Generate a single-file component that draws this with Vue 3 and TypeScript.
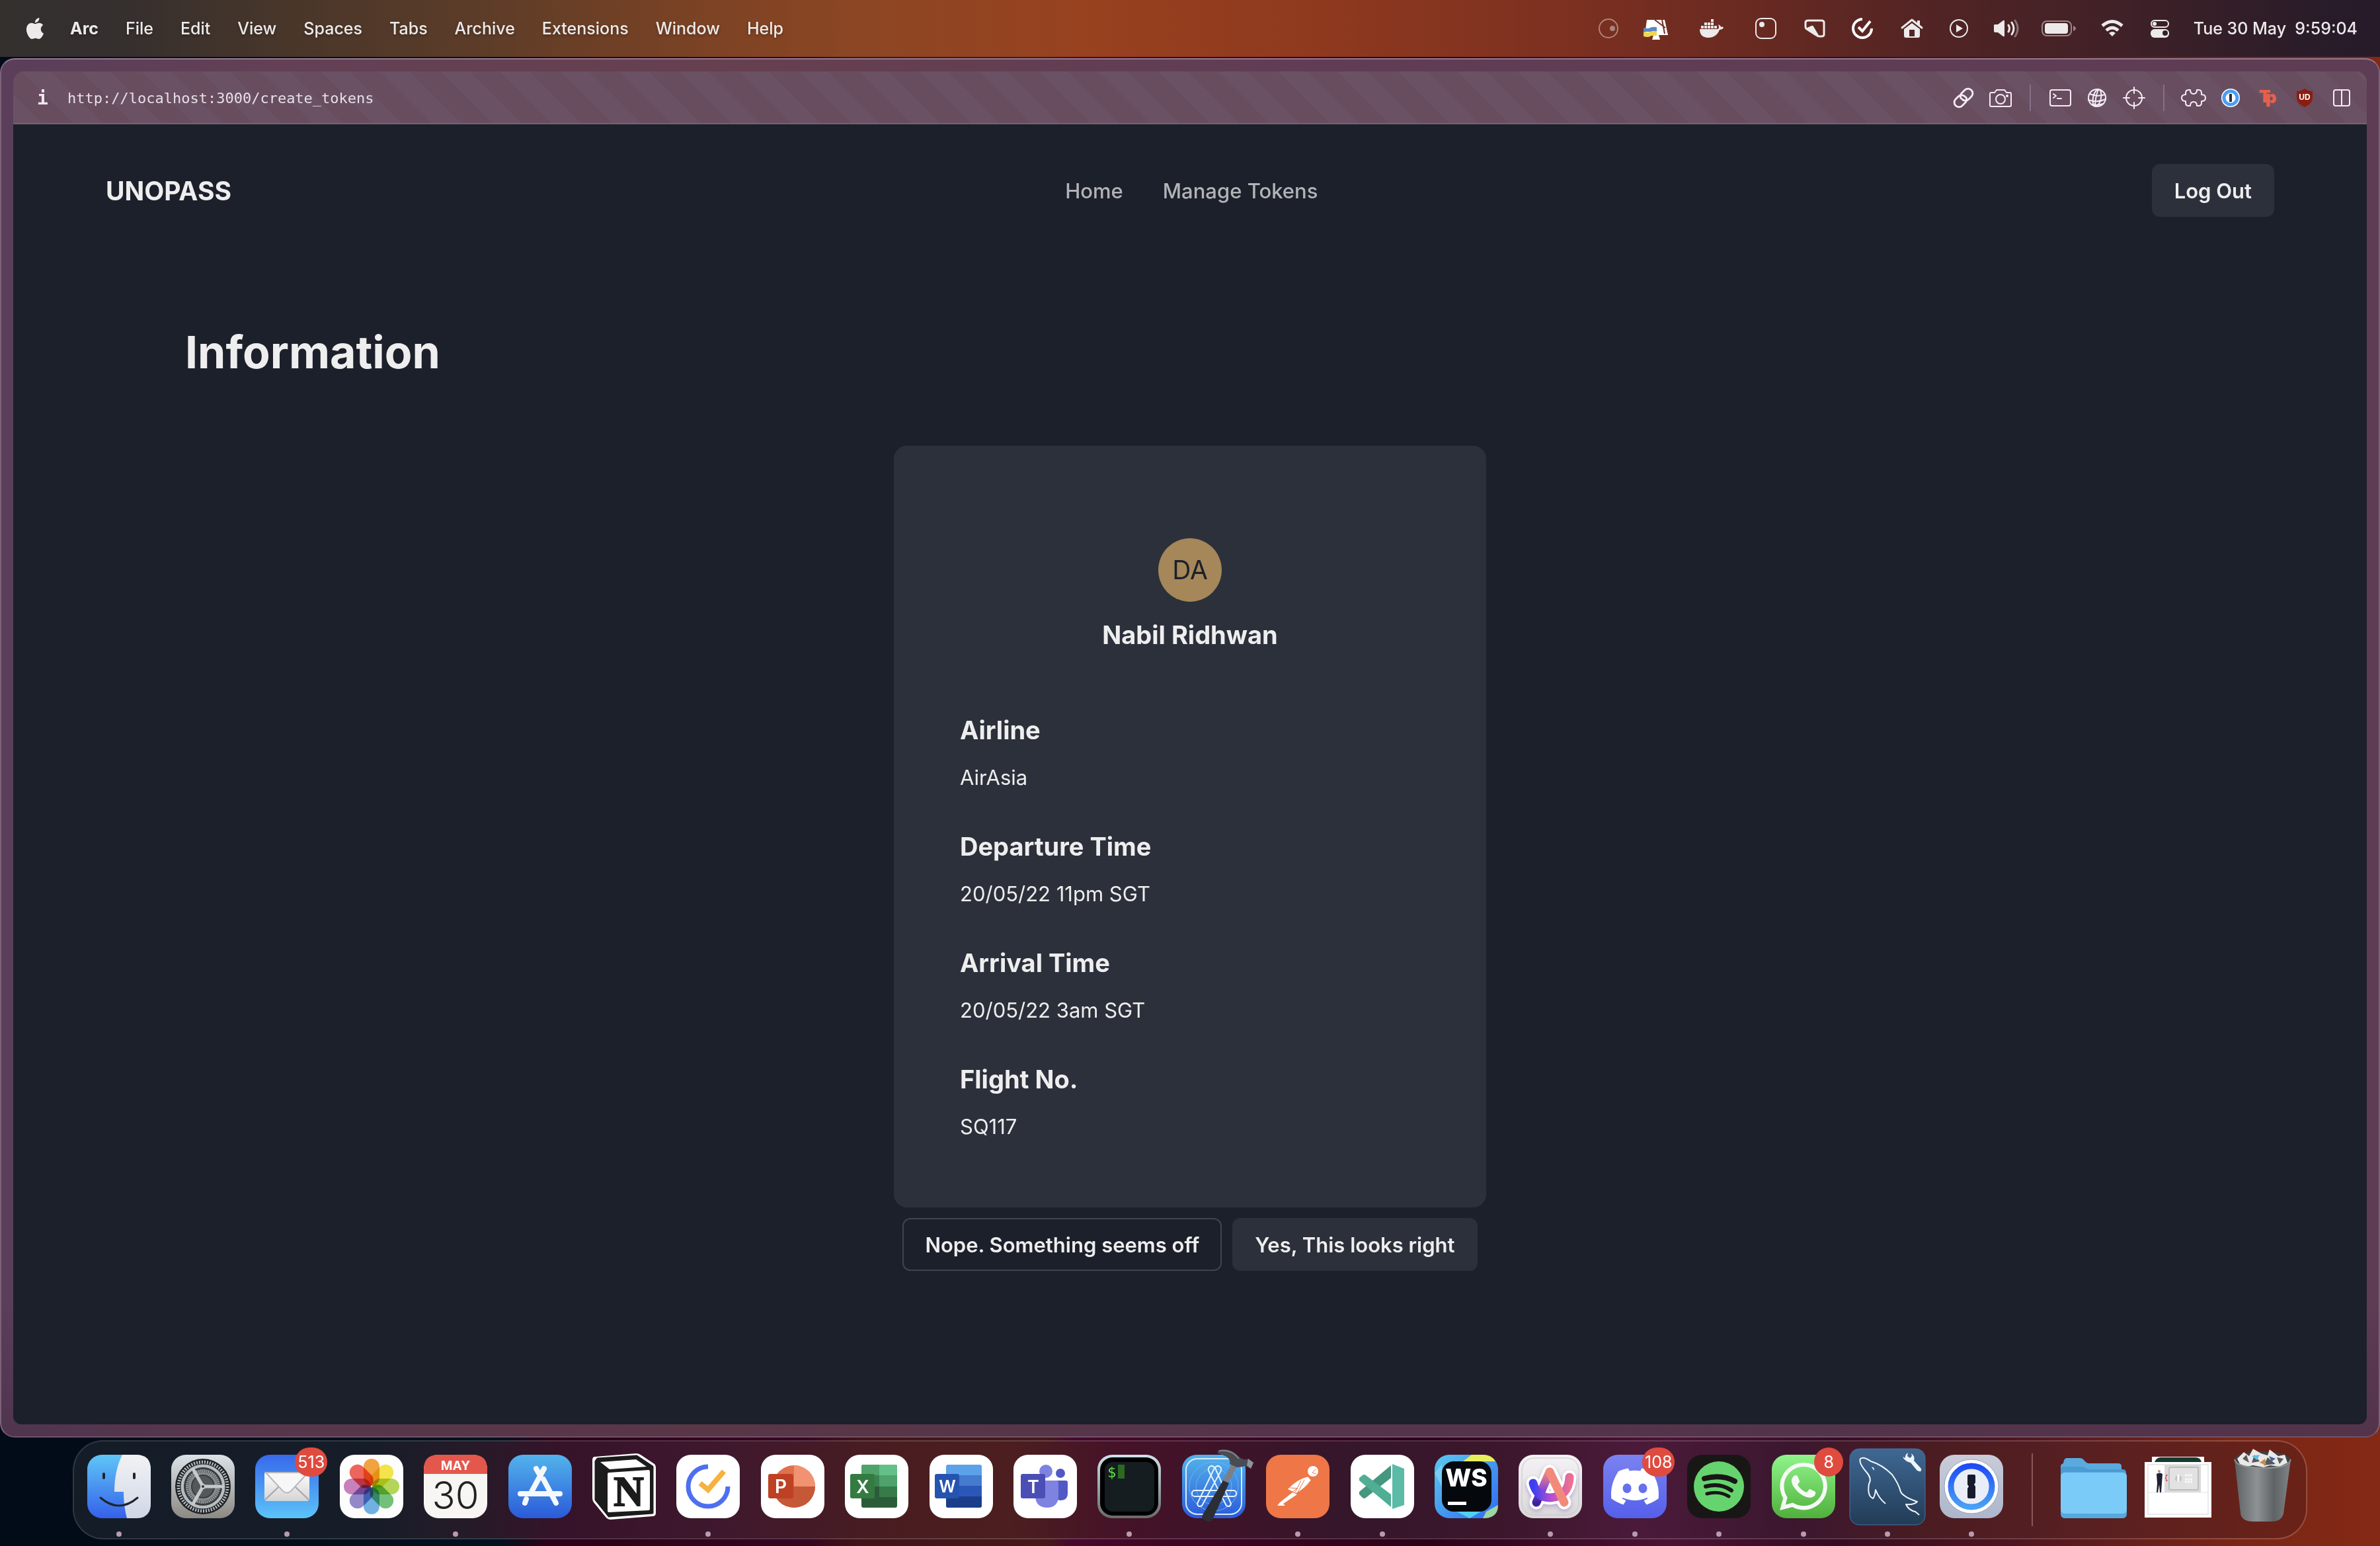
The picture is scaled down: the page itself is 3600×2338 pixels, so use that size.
<script setup lang="ts">
interface MenuIcon {
  name: string
  width: number
  art: string
}

interface ToolIcon {
  name: string
  art: string
}

interface DockApp {
  name: string
  art: string
  running?: boolean
  badge?: string
}

interface Detail {
  label: string
  value: string
}

const menus: string[] = ['File', 'Edit', 'View', 'Spaces', 'Tabs', 'Archive', 'Extensions', 'Window', 'Help']

const details: Detail[] = [
  { label: 'Airline', value: 'AirAsia' },
  { label: 'Departure Time', value: '20/05/22 11pm SGT' },
  { label: 'Arrival Time', value: '20/05/22 3am SGT' },
  { label: 'Flight No.', value: 'SQ117' },
]

const line = 'fill="none" stroke="#eceaea" stroke-linecap="round" stroke-linejoin="round"'

/* Status icons are drawn around their own centre, 40 units tall. */
const statusIcons: MenuIcon[] = [
  { name: 'Recorder', width: 66, art: `<g opacity=".45"><circle r="14" ${line} stroke-width="2"/><circle cx="6" r="4" fill="#eceaea"/></g>` },
  {
    name: 'Display',
    width: 76,
    art: '<path d="M-13-13H14L19 10H-16Z" fill="#fff"/><path d="M-1-13L15-1M10-13L14 8" stroke="#6f2d20" stroke-width="2"/><path d="M-3 10H5L7 17H-5Z" fill="#fff"/><path d="M-18-1Q-11 1-8-1T2-2V5H-18Z" fill="#5c87c8"/><path d="M-18 5Q-11 7-8 5T2 4V11Q-5 10-8 12T-18 12Z" fill="#ecd94a"/>',
  },
  {
    name: 'Docker',
    width: 94,
    art: '<g fill="#eceaea"><path d="M-18 1H9C12 0 11-3 10-6C13-5 14-3 14-2C16-3 18-2 18-1C17 1 14 2 12 2C9 10 3 14-5 14C-14 14-18 9-18 1Z"/><path d="M-16-4h4v4h-4zM-11-4h4v4h-4zM-6-4h4v4h-4zM-1-4h4v4h-4zM4-4h4v4H4zM-11-9h4v4h-4zM-6-9h4v4h-4zM-1-9h4v4h-4zM-1-14h4v4h-4z"/></g>',
  },
  { name: 'Camera control', width: 70, art: `<rect x="-15" y="-15" width="30" height="30" rx="8" ${line} stroke-width="2"/><circle cx="-6" cy="-6" r="4" fill="#eceaea"/>` },
  {
    name: 'Tag',
    width: 78,
    art: `<path d="M-14-9Q-14-12-10-12H10Q14-12 14-9V9Q14 12 10 12H7Q4 12 2 10L-12 1Q-14 0-14-3Z" ${line} stroke-width="3"/><path d="M-14 0L-5-4Q-3-5-2-3L7 12H4Z" fill="#eceaea"/>`,
  },
  { name: 'TickTick', width: 66, art: '<path d="M0-14A14 14 0 1 0 14 0" fill="none" stroke="#fff" stroke-width="4"/><path d="M-6-2L0 4L12-11" fill="none" stroke="#fff" stroke-width="4"/>' },
  {
    name: 'Home',
    width: 84,
    art: `<path d="M-15-1L0-13L15-1" ${line} stroke-width="3"/><path d="M8-12h4v8l-4-3z" fill="#eceaea"/><path fill-rule="evenodd" d="M-12 1L0-8L12 1V11Q12 14 9 14H-9Q-12 14-12 11ZM-4 2V12H4V2Z" fill="#eceaea"/>`,
  },
  { name: 'Now playing', width: 58, art: `<circle r="13" ${line} stroke-width="2"/><path d="M-4-6L6 0L-4 6Z" fill="#eceaea"/>` },
  {
    name: 'Sound',
    width: 86,
    art: `<path d="M-19-5Q-19-6-17-6H-13L-5-12Q-3-13-3-11V11Q-3 13-5 12L-13 6H-17Q-19 6-19 4Z" fill="#eceaea"/><path d="M3-5Q6 0 3 5M8-9Q14 0 8 9" ${line} stroke-width="3"/><path d="M13-12Q21 0 13 12" ${line} stroke-width="3" opacity=".4"/>`,
  },
  {
    name: 'Battery',
    width: 72,
    art: `<rect x="-25" y="-11" width="44" height="22" rx="7" ${line} stroke-width="2" opacity=".5"/><rect x="-21" y="-8" width="35" height="16" rx="4" fill="#eceaea"/><path d="M22-4Q26-2 26 0T22 4Z" fill="#eceaea" opacity=".5"/>`,
  },
  { name: 'Wi-Fi', width: 90, art: '<g fill="none" stroke="#eceaea" stroke-width="5"><path d="M-15-4Q0-17 15-4"/><path d="M-9 3Q0-5 9 3"/></g><path d="M-5 7Q0 3 5 7L0 12Z" fill="#eceaea"/>' },
  {
    name: 'Control Centre',
    width: 54,
    art: `<rect x="-13" y="-12" width="26" height="10" rx="5" ${line} stroke-width="2"/><circle cx="-8" cy="-7" r="3" fill="#eceaea"/><rect x="-14" y="1" width="28" height="13" rx="6" fill="#eceaea"/><circle cx="8" cy="7" r="4" fill="#33202a"/>`,
  },
]

const thin = 'fill="none" stroke="#f6ecf5" stroke-width="2" stroke-linecap="round" stroke-linejoin="round"'

const shareTools: ToolIcon[] = [
  {
    name: 'Copy link',
    art: `<g ${thin} transform="scale(1.4) translate(-12 -12)"><path d="M10 13a5 5 0 0 0 7.54.54l3-3a5 5 0 0 0-7.07-7.07l-3.7 3.7a5 5 0 0 0-.8 5"/><path d="M14 11a5 5 0 0 0-7.54-.54l-3 3a5 5 0 0 0 7.07 7.07l3.7-3.7a5 5 0 0 0 .8-5"/></g>`,
  },
  {
    name: 'Capture',
    art: `<path d="M-16-6Q-16-8-14-8H-9L-6-12H6L9-8H14Q16-8 16-6V11Q16 13 14 13H-14Q-16 13-16 11Z" ${thin}/><circle cy="2" r="7" ${thin}/><circle cx="10" cy="-3" r="2" fill="#f6ecf5"/>`,
  },
]

const devTools: ToolIcon[] = [
  { name: 'Console', art: `<rect x="-15" y="-12" width="31" height="24" rx="3" ${thin}/><path d="M-10-6L-6-3L-10 0M-4 1H2" ${thin}/>` },
  {
    name: 'Network',
    art: `<g ${thin}><circle r="13"/><ellipse rx="6" ry="13" transform="rotate(12)"/><path d="M2-13Q-3 0-3 13M-11-6Q0-1 12-5M-13 3Q0 8 13 2M-8 10Q0 12 9 9"/></g>`,
  },
  { name: 'Inspect', art: `<g ${thin}><circle r="12"/><path d="M0-16V-7M0 16V7M-16 0H-7M16 0H7"/></g>` },
]

const extensions: ToolIcon[] = [
  {
    name: 'Extensions',
    art: `<path d="M-12-7Q-12-12-8-12H-5Q-5-6 0-6T5-12H8Q12-12 12-7V-5Q18-5 18 0T12 5V7Q12 12 8 12H5Q5 6 0 6T-5 12H-8Q-12 12-12 7V5Q-18 5-18 0T-12-5Z" ${thin}/>`,
  },
  { name: '1Password', art: '<circle r="14" fill="#fff"/><circle r="10" fill="none" stroke="#4a9df5" stroke-width="5"/><rect x="-2" y="-6" width="4" height="12" fill="#2c2c34"/>' },
  { name: 'Toptal', art: '<g font-size="26" font-weight="900" fill="#e8604c"><text x="-13" y="7">T</text><text x="-3" y="8">p</text></g>' },
  { name: 'uBlock Origin', art: '<path d="M0-14Q6-10 12-10V0Q12 9 0 14Q-12 9-12 0V-10Q-6-10 0-14Z" fill="#8b1d10"/><text y="3" text-anchor="middle" font-size="12" font-weight="700" fill="#fff">UD</text>' },
  { name: 'Split view', art: `<rect x="-12" y="-12" width="24" height="24" rx="3" ${thin}/><path d="M0-12V12" ${thin}/>` },
]

const tile = (fill: string): string => `<rect x="-48" y="-48" width="96" height="96" rx="22" fill="${fill}"/>`

const petalColours = ['#f0921e', '#f0df2a', '#a7cf3a', '#5cb562', '#57a3dd', '#7f74c0', '#bf6bb0', '#ea4a3e']
const petals = petalColours
  .map((c, i) => `<rect x="-12" y="-42" width="24" height="41" rx="12" fill="${c}" opacity=".85" transform="rotate(${i * 45})" style="mix-blend-mode:multiply"/>`)
  .join('')

const arcMark = '<path d="M-26-5Q-20 17 0 17Q28 15 29-14"/><path d="M-1-22L-21 24"/><path d="M-1-22L21 24"/>'

/* Dock artwork is centred on 0,0 with a 96 unit tile. */
const apps: DockApp[] = [
  {
    name: 'Finder',
    running: true,
    art: `${tile('url(#finderBlue)')}<path d="M5-48H26Q48-48 48-26V26Q48 48 26 48H12Q7 30 7 8H-7Q-7-24 5-48Z" fill="url(#finderGrey)"/><path d="M-23-19V-13M23-19V-13" stroke="#20242c" stroke-width="4" stroke-linecap="round"/><path d="M-28 17Q0 41 28 17" fill="none" stroke="#20242c" stroke-width="3" stroke-linecap="round"/>`,
  },
  {
    name: 'System Settings',
    art: `${tile('url(#steel)')}<circle r="42" fill="#1f2224"/><circle r="37" fill="none" stroke="#b7bec2" stroke-width="5" stroke-dasharray="2 2"/><circle r="31" fill="none" stroke="#b7bec2" stroke-width="5"/><circle r="29" fill="#3a3d40"/><circle r="24" fill="none" stroke="#9aa0a3" stroke-width="4" stroke-dasharray="2 1"/><circle r="20" fill="none" stroke="#85898c" stroke-width="4"/><circle r="16" fill="#55585b"/><path d="M0 0H32M0 0L-16-28M0 0L-16 28" stroke="#c3cacd" stroke-width="5"/><circle r="4" fill="#c3cacd"/><circle r="2" fill="#333"/>`,
  },
  {
    name: 'Mail',
    running: true,
    badge: '513',
    art: `${tile('url(#mailBlue)')}<rect x="-34" y="-22" width="68" height="44" rx="4" fill="url(#paper)"/><path d="M-33 20L-12 0M33 20L12 0" stroke="#a5a5a8" stroke-width="2"/><path d="M-32-21L-6 7Q0 12 6 7L32-21Z" fill="#f7f7f8" stroke="#b9b9bc" stroke-width="2"/>`,
  },
  { name: 'Photos', art: `${tile('#fdfdfd')}<g style="isolation:isolate">${petals}</g>` },
  {
    name: 'Calendar',
    running: true,
    art: `${tile('#f7f6f3')}<path d="M-48-19V-26Q-48-48-26-48H26Q48-48 48-26V-19Z" fill="#e4574d"/><text y="-25" text-anchor="middle" font-size="19" font-weight="700" fill="#fff">MAY</text><text y="34" text-anchor="middle" font-size="58" font-weight="300" fill="#222">30</text>`,
  },
  {
    name: 'App Store',
    art: `${tile('url(#storeBlue)')}<g stroke="#f4f8fd" stroke-width="8" stroke-linecap="round"><path d="M-6-27L-2-20M6-27L-13 8M-21 19L-23 25M5-11L24 25M-30 11H30"/></g>`,
  },
  {
    name: 'Notion',
    art: '<path d="M-44-45L18-50Q22-50 25-48L46-34Q48-32 48-29V40Q48 45 43 45L-20 50Q-25 50-28 46L-46 24Q-48 21-48 18V-40Q-48-45-44-45Z" fill="#fff"/><path d="M-40-42L19-46L43-30V40L-23 45L-43 20V-38Z" fill="#1c1c1c" stroke="#1c1c1c" stroke-width="3" stroke-linejoin="round"/><path d="M-36-37L18-41L34-30L-22-26Z" fill="#fff"/><path d="M-25-19Q-25-21-23-21L37-25Q39-25 39-22V34Q39 36 37 36L-23 39Q-25 39-25 37Z" fill="#fff"/><text x="7" y="29" text-anchor="middle" font-family="Liberation Serif, serif" font-size="63" font-weight="700" fill="#1c1c1c" stroke="#1c1c1c" stroke-width="2">N</text>',
  },
  {
    name: 'TickTick',
    running: true,
    art: `${tile('#fff')}<path d="M0-30A30 30 0 1 0 30 0" fill="none" stroke="#4e6ff0" stroke-width="7"/><path d="M-12-5L0 5L24-23" fill="none" stroke="#f5b33e" stroke-width="8"/>`,
  },
  {
    name: 'PowerPoint',
    art: `${tile('#fff')}<circle cx="2" r="32" fill="#e0714f"/><path d="M2-32A32 32 0 0 1 34 0H2Z" fill="#f19272"/><path d="M-30 0H34A32 32 0 0 1-30 0Z" fill="#c55836"/><rect x="-37" y="-19" width="38" height="37" rx="3" fill="#be4123"/><text x="-18" y="10" text-anchor="middle" font-size="28" font-weight="600" fill="#fff">P</text>`,
  },
  {
    name: 'Excel',
    art: `${tile('#fff')}<rect x="-23" y="-33" width="54" height="65" rx="3" fill="#2b5c39"/><path d="M-23-17V-30Q-23-33-20-33H4V-17Z" fill="#4ea26a"/><path d="M4-33H28Q31-33 31-30V-17H4Z" fill="#63c086"/><path d="M-23-17H4V0H-23Z" fill="#3a8250"/><path d="M4-17H31V0H4Z" fill="#4ea26a"/><path d="M4 0H31V16H4Z" fill="#377c48"/><rect x="-40" y="-19" width="37" height="37" rx="3" fill="#347b42"/><text x="-21" y="10" text-anchor="middle" font-size="27" font-weight="600" fill="#fff">X</text>`,
  },
  {
    name: 'Word',
    art: `${tile('#fff')}<rect x="-23" y="-33" width="54" height="65" rx="3" fill="#5ba2e8"/><path d="M-23-17H31V0H-23Z" fill="#447bcf"/><path d="M-23-1H31V16H-23Z" fill="#2b58b8"/><path d="M-23 15H31V29Q31 32 28 32H-20Q-23 32-23 29Z" fill="#1c3d8a"/><rect x="-40" y="-19" width="37" height="37" rx="3" fill="#2553b2"/><text x="-21" y="9" text-anchor="middle" font-size="25" font-weight="600" fill="#fff">W</text>`,
  },
  {
    name: 'Teams',
    art: `${tile('#fff')}<circle cx="1" cy="-23" r="10" fill="#7e83e2"/><circle cx="23" cy="-20" r="7" fill="#5159c5"/><path d="M10-9H31Q34-9 34-6V10Q34 21 23 21Q18 21 14 18Z" fill="#5159c5"/><path d="M-15-9H17Q20-9 20-6V14Q20 32 2 32Q-15 31-15 14Z" fill="#7e83e2"/><rect x="-37" y="-19" width="37" height="37" rx="3" fill="#4b4fb5"/><text x="-18" y="10" text-anchor="middle" font-size="27" font-weight="600" fill="#fff">T</text>`,
  },
  {
    name: 'Terminal',
    running: true,
    art: `${tile('url(#bezel)')}<rect x="-44" y="-44" width="88" height="88" rx="19" fill="#000"/><rect x="-37" y="-37" width="75" height="75" rx="12" fill="#161d20"/><text x="-33" y="-14" font-family="DejaVu Sans Mono, monospace" font-size="22" fill="#62e24c">$</text><rect x="-17" y="-33" width="10" height="21" fill="#2c6a22"/>`,
  },
  {
    name: 'Xcode',
    art: `${tile('url(#storeBlue)')}<rect x="-42" y="-42" width="84" height="84" rx="17" fill="none" stroke="#d8ecff" stroke-width="2"/><g fill="none" stroke="#6fb0ee"><circle r="37"/><circle r="27"/></g><g fill="none" stroke="#e6f3ff" stroke-width="2"><rect x="-33" y="6" width="67" height="9" rx="4"/><path d="M-6-30Q-2-33 2-28L26 26Q25 32 19 29L-8-24Q-9-28-6-30ZM9-30Q5-33 1-28L-25 26Q-24 32-18 29L11-24Q12-28 9-30Z"/></g><path d="M28-36L36-32L22-6L13-8Z" fill="#7d7f86"/><path d="M14-9L23-5L-1 48Q-4 55-12 52T-17 43Z" fill="#2c2e36"/><path d="M6-54Q24-60 37-46Q43-40 49-41L52-42L60-36L56-27L47-31Q42-29 35-29L24-34Q27-45 6-50Z" fill="#4a4c54"/><path d="M8-54Q26-57 38-42" fill="none" stroke="#85878e" stroke-width="2"/><path d="M52-42L60-36L56-27L50-32Z" fill="#90929a"/>`,
  },
  {
    name: 'Postman',
    running: true,
    art: `${tile('#ee7647')}<circle cx="23" cy="-23" r="8" fill="#fff"/><path d="M16-15L20-10Q10 4-3 10L-15 4Q-1-11 16-15ZM-8 9L-1 12L-22 26L-19 29L-31 29L-27 24Z" fill="#fff"/><path d="M15-15L20-10M27-26L22-21L28-19M5-9L-4 9M10-10L0 9M-12 2L0 3M-9 9L0 2" fill="none" stroke="#ee7647" stroke-width="1"/>`,
  },
  {
    name: 'VS Code Insiders',
    running: true,
    art: `${tile('#fff')}<path d="M13-32V-13L-25 17Q-28 19-30 17L-35 12V8Z" fill="#45977f"/><path d="M-35-13L-30-17Q-28-19-25-17L13 12V31L-35-9Z" fill="#4fae94"/><path d="M15-34L33-27V28L15 34Z" fill="#5cbba6"/>`,
  },
  {
    name: 'WebStorm',
    art: `${tile('url(#stormBlue)')}<path d="M-5-38L8-48H26Q38-48 44-38Z" fill="#e8ef5c"/><path d="M-48-20L-37-34V0Z" fill="#8fdcf8" opacity=".6"/><path d="M25 48L30 38L48 28Q48 48 26 48Z" fill="#9fd6a0"/><path d="M-15 38H22L5 48Z" fill="#4fd0f2"/><rect x="-37" y="-38" width="75" height="76" rx="18" fill="#05080c"/><text y="0" text-anchor="middle" font-size="37" font-weight="800" fill="#fff">WS</text><rect x="-28" y="23" width="28" height="5" fill="#fff"/>`,
  },
  {
    name: 'Arc',
    running: true,
    art: `${tile('url(#pearl)')}<rect x="-43" y="-43" width="86" height="86" rx="18" fill="none" stroke="#c9c6c9"/><g fill="none" stroke="#fff" stroke-width="21" stroke-linecap="round" style="filter:drop-shadow(0 3px 3px #b9a8cc)">${arcMark}</g><g fill="none" stroke-width="13" stroke-linecap="round"><path d="M-1-22L-21 24" stroke="url(#arcLeg)"/><path d="M-26-5Q-20 17 0 17Q28 15 29-14" stroke="url(#arcSwoosh)"/><path d="M-1-22L21 24" stroke="#f28a7c"/></g>`,
  },
  {
    name: 'Discord',
    running: true,
    badge: '108',
    art: `${tile('url(#blurple)')}<path transform="scale(3) translate(-12 -12)" fill="#fff" d="M20.317 4.3698a19.7913 19.7913 0 00-4.8851-1.5152.0741.0741 0 00-.0785.0371c-.211.3753-.4447.8648-.6083 1.2495-1.8447-.2762-3.68-.2762-5.4868 0-.1636-.3933-.4058-.8742-.6177-1.2495a.077.077 0 00-.0785-.037 19.7363 19.7363 0 00-4.8852 1.515.0699.0699 0 00-.0321.0277C.5334 9.0458-.319 13.5799.0992 18.0578a.0824.0824 0 00.0312.0561c2.0528 1.5076 4.0413 2.4228 5.9929 3.0294a.0777.0777 0 00.0842-.0276c.4616-.6304.8731-1.2952 1.226-1.9942a.076.076 0 00-.0416-.1057c-.6528-.2476-1.2743-.5495-1.8722-.8923a.077.077 0 01-.0076-.1277c.1258-.0943.2517-.1923.3718-.2914a.0743.0743 0 01.0776-.0105c3.9278 1.7933 8.18 1.7933 12.0614 0a.0739.0739 0 01.0785.0095c.1202.099.246.1981.3728.2924a.077.077 0 01-.0066.1276 12.2986 12.2986 0 01-1.873.8914.0766.0766 0 00-.0407.1067c.3604.698.7719 1.3628 1.225 1.9932a.076.076 0 00.0842.0286c1.961-.6067 3.9495-1.5219 6.0023-3.0294a.077.077 0 00.0313-.0552c.5004-5.177-.8382-9.6739-3.5485-13.6604a.061.061 0 00-.0312-.0286zM8.02 15.3312c-1.1825 0-2.1569-1.0857-2.1569-2.419 0-1.3332.9555-2.4189 2.157-2.4189 1.2108 0 2.1757 1.0952 2.1568 2.419 0 1.3332-.9555 2.4189-2.1569 2.4189zm7.9748 0c-1.1825 0-2.1569-1.0857-2.1569-2.419 0-1.3332.9554-2.4189 2.1569-2.4189 1.2108 0 2.1757 1.0952 2.1568 2.419 0 1.3332-.946 2.4189-2.1568 2.4189Z"/>`,
  },
  {
    name: 'Spotify',
    running: true,
    art: `${tile('#191716')}<circle r="38" fill="#66d46e"/><g fill="none" stroke="#191716" stroke-linecap="round"><path d="M-22-12Q4-19 24-8" stroke-width="8"/><path d="M-20 0Q2-6 19 6" stroke-width="6"/><path d="M-18 11Q0 6 15 15" stroke-width="5"/></g>`,
  },
  {
    name: 'WhatsApp',
    running: true,
    badge: '8',
    art: `${tile('url(#chatGreen)')}<path transform="scale(3) translate(-12 -12)" fill="#f6faf5" d="M17.472 14.382c-.297-.149-1.758-.867-2.03-.967-.273-.099-.471-.148-.67.15-.197.297-.767.966-.94 1.164-.173.199-.347.223-.644.075-.297-.15-1.255-.463-2.39-1.475-.883-.788-1.48-1.761-1.653-2.059-.173-.297-.018-.458.13-.606.134-.133.298-.347.446-.52.149-.174.198-.298.298-.497.099-.198.05-.371-.025-.52-.075-.149-.669-1.612-.916-2.207-.242-.579-.487-.5-.669-.51-.173-.008-.371-.01-.57-.01-.198 0-.52.074-.792.372-.272.297-1.04 1.016-1.04 2.479 0 1.462 1.065 2.875 1.213 3.074.149.198 2.096 3.2 5.077 4.487.709.306 1.262.489 1.694.625.712.227 1.36.195 1.871.118.571-.085 1.758-.719 2.006-1.413.248-.694.248-1.289.173-1.413-.074-.124-.272-.198-.57-.347m-5.421 7.403h-.004a9.87 9.87 0 01-5.031-1.378l-.361-.214-3.741.982.998-3.648-.235-.374a9.86 9.86 0 01-1.51-5.26c.001-5.45 4.436-9.884 9.888-9.884 2.64 0 5.122 1.03 6.988 2.898a9.825 9.825 0 012.893 6.994c-.003 5.45-4.437 9.884-9.885 9.884m8.413-18.297A11.815 11.815 0 0012.05 0C5.495 0 .16 5.335.157 11.892c0 2.096.547 4.142 1.588 5.945L.057 24l6.305-1.654a11.882 11.882 0 005.683 1.448h.005c6.554 0 11.89-5.335 11.893-11.893a11.821 11.821 0 00-3.48-8.413z"/>`,
  },
  {
    name: 'MySQL Workbench',
    running: true,
    art: '<rect x="-57" y="-57" width="114" height="115" rx="14" fill="url(#benchBlue)" stroke="#46739f" stroke-width="1"/><path d="M-3 26Q-13 18-18 5Q-19 15-22 18Q-31 14-28-4Q-23-12-32-22Q-44-36-41-42Q-36-46-25-38Q-8-33 7-18Q17-4 20 8Q24 16 45 23Q40 28 28 27Q32 36 42 38L48 43" fill="none" stroke="#f2f7fb" stroke-width="2" stroke-linejoin="round"/><path d="M-24-29Q-20-30-20-24Z" fill="#f2f7fb"/><path d="M31-51L30-46L34-43L37-46L36-50Q42-46 40-39L51-27Q52-22 48-23L45-24L35-36Q26-38 23-45L27-43Q26-48 31-51Z" fill="#eef5fa"/>',
  },
  {
    name: '1Password',
    running: true,
    art: `${tile('url(#vault)')}<circle r="41" fill="#fff"/><circle r="41" fill="none" stroke="#9aa2ba"/><circle r="31" fill="none" stroke="url(#ring)" stroke-width="9"/><circle r="26" fill="#e9edf8"/><path d="M-6-16Q-6-18-4-18H4Q6-18 6-16V-6L4-3L6 0V16Q6 18 4 18H-4Q-6 18-6 16V3L-4 0L-6-3Z" fill="#171a2c"/>`,
  },
]

const shelf: DockApp[] = [
  {
    name: 'Downloads',
    art: '<path d="M-49-30Q-49-34-45-35Q-44-43-40-43H-20Q-16-43-13-39T-6-35H38Q43-35 43-30V0H-49Z" fill="#5aaade"/><path d="M-49-26Q-49-30-45-30H-18Q-14-30-11-28T-4-26H45Q50-26 50-20V0H-49Z" fill="#4a9bd4"/><rect x="-49" y="-22" width="100" height="70" rx="6" fill="#56a9de"/><rect x="-49" y="-21" width="100" height="62" rx="6" fill="#7bcbf8"/>',
  },
  {
    name: 'Documents stack',
    art: '<rect x="-39" y="-45" width="79" height="20" fill="#fff"/><path d="M-35-37Q-32-44-26-44H27Q34-44 36-37Z" fill="#153a30"/><rect x="-50" y="-37" width="101" height="84" fill="#fff"/><rect x="-45" y="-33" width="91" height="75" fill="none" stroke="#d4d4d4"/><rect x="-20" y="-33" width="55" height="42" fill="#d9d9d9"/><rect x="-13" y="-29" width="44" height="34" rx="2" fill="#e2e2e2" stroke="#bdbdbd" stroke-width="2"/><circle cx="1" cy="-12" r="5" fill="#c4c4c4"/><path d="M1-18V-7" stroke="#fff" stroke-width="3"/><path d="M11-17H22M11-11H22M11-7H22" stroke="#f8f8f8" stroke-width="3" stroke-dasharray="3 1"/><path d="M-45 9H46" stroke="#e3e3e3"/><circle cx="-28" cy="-23" r="2" fill="#c98a6a"/><path d="M-32-19Q-27-22-23-19L-24-5L-25 9H-27L-28-3L-30 9H-32L-31-5Z" fill="#1c2233"/><path d="M-16-18Q-20-13-16-8" fill="none" stroke="#d84c48" stroke-width="2" stroke-dasharray="3 1"/>',
  },
  {
    name: 'Bin',
    art: '<path d="M-42-41L-33 41Q-31 53-14 53H14Q29 53 32 41L43-41Z" fill="url(#bin)"/><ellipse cy="-41" rx="42" ry="12" fill="#3e4143"/><path d="M-38-42L-28-52L-20-46L-14-57L-2-50L8-47L11-56L24-46L34-48L38-36L26-30L12-32L2-29L-14-32L-24-30L-34-34Z" fill="#e9e9e7"/><path d="M-30-42L-20-36L-24-48ZM-12-48L-4-38L-16-36ZM8-44L20-34L2-32ZM22-44L32-42L26-34Z" fill="#55595c"/><path d="M-16-46L-4-48L-8-40Z" fill="#5fbde6"/><path d="M10-46L20-42L14-38Z" fill="#3f62a8"/><path d="M-4-36L4-42L6-32Z" fill="#c98b4a"/><path d="M-42-41Q-40-29 0-28T43-41" fill="none" stroke="#8c9092" stroke-width="2"/>',
  },
]
</script>

<template>
  <div class="desktop">
    <svg class="defs" aria-hidden="true">
      <defs>
        <linearGradient id="finderBlue" x2="0" y2="1"><stop stop-color="#5fc6f7" /><stop offset="1" stop-color="#3560ea" /></linearGradient>
        <linearGradient id="finderGrey" x2="0" y2="1"><stop stop-color="#f2f2f4" /><stop offset="1" stop-color="#cfd7e6" /></linearGradient>
        <linearGradient id="steel" x2="0" y2="1"><stop stop-color="#dbe3e8" /><stop offset="1" stop-color="#8d8883" /></linearGradient>
        <linearGradient id="mailBlue" x2="0" y2="1"><stop stop-color="#3769ec" /><stop offset="1" stop-color="#5cc4f9" /></linearGradient>
        <linearGradient id="paper" x2="0" y2="1"><stop stop-color="#fdfdfd" /><stop offset="1" stop-color="#d5d5d6" /></linearGradient>
        <linearGradient id="storeBlue" x2="0" y2="1"><stop stop-color="#52b4ec" /><stop offset="1" stop-color="#2b5ad9" /></linearGradient>
        <linearGradient id="bezel" x2="0" y2="1"><stop stop-color="#cfe2ec" /><stop offset="1" stop-color="#6a6a6a" /></linearGradient>
        <linearGradient id="stormBlue" x2="1" y2="1"><stop stop-color="#5cc8ee" /><stop offset="1" stop-color="#2f6cf0" /></linearGradient>
        <linearGradient id="pearl" x2="0" y2="1"><stop stop-color="#f4f2f4" /><stop offset="1" stop-color="#d9d7d9" /></linearGradient>
        <linearGradient id="arcSwoosh"><stop stop-color="#3b3ff2" /><stop offset="0.5" stop-color="#b44fd0" /><stop offset="1" stop-color="#ea6f92" /></linearGradient>
        <linearGradient id="arcLeg" x2="0" y2="1"><stop stop-color="#f28a7c" /><stop offset="0.6" stop-color="#8a45d8" /><stop offset="1" stop-color="#3c22a0" /></linearGradient>
        <linearGradient id="blurple" x2="0" y2="1"><stop stop-color="#7b82f1" /><stop offset="1" stop-color="#5560ea" /></linearGradient>
        <linearGradient id="chatGreen" x2="0" y2="1"><stop stop-color="#8ff58a" /><stop offset="1" stop-color="#50b03c" /></linearGradient>
        <linearGradient id="benchBlue" x2="0" y2="1"><stop stop-color="#3f6894" /><stop offset="1" stop-color="#223c56" /></linearGradient>
        <linearGradient id="vault" x2="0" y2="1"><stop stop-color="#c9ccd8" /><stop offset="1" stop-color="#adb6cc" /></linearGradient>
        <linearGradient id="ring" x2="0" y2="1"><stop stop-color="#1f4df5" /><stop offset="1" stop-color="#4aa0f4" /></linearGradient>
        <linearGradient id="bin"><stop stop-color="#5d6163" /><stop offset="0.4" stop-color="#8d9294" /><stop offset="0.7" stop-color="#5f6365" /><stop offset="1" stop-color="#808486" /></linearGradient>
      </defs>
    </svg>

    <header class="menubar">
      <nav class="menus" aria-label="Application menu">
        <button type="button" class="menu apple" aria-label="Apple">
          <svg viewBox="0 0 24 24" width="32" height="32" fill="#eceaea">
            <path d="M12.152 6.896c-.948 0-2.415-1.078-3.96-1.04-2.04.027-3.91 1.183-4.961 3.014-2.117 3.675-.546 9.103 1.519 12.09 1.013 1.454 2.208 3.09 3.792 3.039 1.52-.065 2.09-.987 3.935-.987 1.831 0 2.35.987 3.96.948 1.637-.026 2.676-1.48 3.676-2.948 1.156-1.688 1.636-3.325 1.662-3.415-.039-.013-3.182-1.221-3.22-4.857-.026-3.04 2.48-4.494 2.597-4.559-1.429-2.09-3.623-2.324-4.39-2.376-2-.156-3.675 1.09-4.61 1.09zM15.53 3.83c.843-1.012 1.4-2.427 1.245-3.83-1.207.052-2.662.805-3.532 1.818-.78.896-1.454 2.338-1.273 3.714 1.338.104 2.715-.688 3.559-1.701" />
          </svg>
        </button>
        <button type="button" class="menu current">Arc</button>
        <button v-for="menu in menus" :key="menu" type="button" class="menu">{{ menu }}</button>
      </nav>
      <div class="status">
        <button v-for="icon in statusIcons" :key="icon.name" type="button" class="status-item" :aria-label="icon.name">
          <svg :width="icon.width" height="40" :viewBox="`${-icon.width / 2} -20 ${icon.width} 40`" v-html="icon.art"></svg>
        </button>
        <time class="clock">Tue 30 May&nbsp; 9:59:04</time>
      </div>
    </header>

    <section class="window">
      <div class="toolbar">
        <span class="info" aria-hidden="true">i</span>
        <input class="address" type="text" aria-label="Address" value="http://localhost:3000/create_tokens" />
        <div class="tools">
          <button v-for="tool in shareTools" :key="tool.name" type="button" class="tool" :aria-label="tool.name">
            <svg width="40" height="40" viewBox="-20 -20 40 40" v-html="tool.art"></svg>
          </button>
          <span class="rule"></span>
          <button v-for="tool in devTools" :key="tool.name" type="button" class="tool" :aria-label="tool.name">
            <svg width="40" height="40" viewBox="-20 -20 40 40" v-html="tool.art"></svg>
          </button>
          <span class="rule"></span>
          <button v-for="tool in extensions" :key="tool.name" type="button" class="tool" :aria-label="tool.name">
            <svg width="40" height="40" viewBox="-20 -20 40 40" v-html="tool.art"></svg>
          </button>
        </div>
      </div>

      <div class="page">
        <header class="site-header">
          <a class="brand" href="#">UNOPASS</a>
          <nav class="links">
            <a href="#home">Home</a>
            <a href="#tokens">Manage Tokens</a>
          </nav>
          <button type="button" class="btn solid">Log Out</button>
        </header>

        <main class="main">
          <h1>Information</h1>
          <article class="card">
            <div class="avatar">DA</div>
            <h2>Nabil Ridhwan</h2>
            <dl>
              <div v-for="item in details" :key="item.label" class="detail">
                <dt>{{ item.label }}</dt>
                <dd>{{ item.value }}</dd>
              </div>
            </dl>
          </article>
          <div class="actions">
            <button type="button" class="btn outline">Nope. Something seems off</button>
            <button type="button" class="btn solid">Yes, This looks right</button>
          </div>
        </main>
      </div>
    </section>

    <footer class="dock">
      <div class="apps">
        <button v-for="app in apps" :key="app.name" type="button" class="app" :class="{ running: app.running }" :aria-label="app.name">
          <svg width="120" height="146" viewBox="-60 -68 120 146" v-html="app.art"></svg>
          <span v-if="app.badge" class="badge">{{ app.badge }}</span>
        </button>
      </div>
      <span class="dock-rule"></span>
      <div class="shelf">
        <button v-for="item in shelf" :key="item.name" type="button" class="app" :aria-label="item.name">
          <svg width="120" height="146" viewBox="-60 -68 120 146" v-html="item.art"></svg>
        </button>
      </div>
    </footer>
  </div>
</template>

<style>
html,
body {
  margin: 0;
  background: #0b0f1a;
}
</style>

<style scoped>
* {
  box-sizing: border-box;
}

button {
  margin: 0;
  padding: 0;
  border: 0;
  background: none;
  color: inherit;
  font: inherit;
}

svg {
  display: block;
  overflow: visible;
}

.desktop {
  display: flex;
  flex-direction: column;
  min-height: 100vh;
  font-family: Inter, "Liberation Sans", sans-serif;
  background: linear-gradient(90deg, #020b18 0, #03101e 21%, #2a0219 23%, #35061f 34%, #401418 36%, #461819 44%, #45082a 45%, #2c0219 60%, #4a1236 70%, #350b22 77%, #4c1420 84%, #7a2616 94%, #842915 100%);
}

.defs {
  position: absolute;
  width: 0;
  height: 0;
}

.menubar {
  display: flex;
  justify-content: space-between;
  align-items: center;
  height: 86px;
  padding: 0 34px 0 17px;
  color: #eceaea;
  font-size: 25px;
  font-weight: 500;
  line-height: 32px;
  background: linear-gradient(90deg, #33302e 0, #352f2e 5%, #48362a 12%, #5c3c28 20%, #7a4224 29%, #8c4623 36%, #98411f 46%, #8f391e 55%, #7c3020 66%, #6a2a21 73%, #522424 81%, #402127 89%, #2a1c29 97%, #261b29 100%);
}

.menus,
.status,
.tools,
.links,
.actions {
  display: flex;
  align-items: center;
}

.menus {
  gap: 1px;
}

.menu {
  padding: 0 20px;
  text-shadow: 0 2px 4px rgba(0, 0, 0, 0.3);
}

.apple {
  padding-right: 16px;
}

.current {
  font-weight: 700;
}

.clock {
  padding-left: 24px;
  white-space: nowrap;
}

.window {
  display: flex;
  flex: 1;
  flex-direction: column;
  margin: 2px 0 4px;
  padding: 18px;
  border: 2px solid #87708a;
  border-color: #937a90 #7c6379 #6f5268;
  border-radius: 22px;
  background:
    linear-gradient(180deg, transparent 90%, rgba(50, 25, 45, 0.25) 100%),
    linear-gradient(90deg, #5a3e5a 0, #634055 12%, #66404f 30%, #603d55 55%, #5d3c54 100%);
}

.toolbar {
  display: flex;
  align-items: center;
  height: 80px;
  padding: 2px 10px 0 36px;
  border-bottom: 2px solid #7a6072;
  border-radius: 16px 16px 0 0;
  color: #f0e6ee;
  background: repeating-linear-gradient(45deg, #6a5264 0 31px, #684d5f 31px 64px);
}

.info,
.address {
  font-family: "DejaVu Sans Mono", "Liberation Mono", monospace;
}

.info {
  width: 46px;
  font-size: 28px;
  font-weight: 700;
}

.address {
  flex: 1;
  height: 40px;
  padding: 0;
  border: 0;
  outline: 0;
  background: none;
  color: #e8dfe7;
  font-size: 22px;
}

.tool {
  display: flex;
  justify-content: center;
  width: 56px;
}

.rule {
  width: 2px;
  height: 40px;
  margin: 0 16px;
  background: #85708a;
}

.page {
  flex: 1;
  border-radius: 0 0 12px 12px;
  color: #eeeeee;
  background: #1c202b;
}

.site-header {
  display: flex;
  justify-content: space-between;
  align-items: center;
  padding: 60px 140px;
}

.site-header a {
  padding-top: 2px;
  color: inherit;
  text-decoration: none;
}

.brand {
  font-size: 39px;
  font-weight: 700;
  line-height: 48px;
}

.links {
  gap: 60px;
  color: #b2b3b6;
  font-size: 31px;
  font-weight: 500;
  line-height: 40px;
}

.btn {
  height: 80px;
  padding: 2px 32px 0;
  border: 2px solid #2c303b;
  border-radius: 12px;
  font-size: 31px;
  font-weight: 600;
  line-height: 40px;
}

.solid {
  background: #2c303b;
}

.outline {
  border-color: #41444f;
}

.main {
  padding: 100px 260px 160px;
}

h1,
h2,
dl,
dd {
  margin: 0;
}

h1 {
  margin-bottom: 98px;
  font-size: 68px;
  font-weight: 700;
  line-height: 88px;
}

.card {
  width: 896px;
  margin: 0 auto;
  padding: 140px 100px 102px;
  border-radius: 20px;
  background: #2c303b;
}

.avatar {
  width: 96px;
  height: 96px;
  margin: 0 auto 26px;
  border-radius: 50%;
  background: #a58759;
  color: #1c202b;
  font-size: 39px;
  line-height: 96px;
  text-align: center;
}

h2 {
  margin-bottom: 96px;
  text-align: center;
}

h2,
dt {
  font-size: 38px;
  font-weight: 700;
  line-height: 48px;
}

.detail + .detail {
  margin-top: 60px;
}

dd {
  margin-top: 28px;
  font-size: 31px;
  line-height: 40px;
}

.actions {
  justify-content: center;
  gap: 16px;
  margin-top: 16px;
}

.dock {
  display: flex;
  align-items: center;
  height: 150px;
  margin: 0 110px 10px;
  padding: 0 2px 0 4px;
  border: 2px solid rgba(255, 255, 255, 0.18);
  border-radius: 46px;
  background: linear-gradient(90deg, #141c27 0, #161d29 13%, #271a28 18%, #36132a 22%, #3f182d 29%, #491d20 37%, #4c1e20 42%, #451228 47%, #35162a 57%, #3c172c 64%, #4b1a3a 70%, #3b172f 77%, #4a1c22 83%, #5a2021 91%, #6a2217 100%);
  background-clip: padding-box;
}

.apps {
  display: flex;
  flex: 1;
}

.app {
  position: relative;
  display: flex;
  flex: 1 1 0;
  justify-content: center;
  min-width: 0;
}

.app svg {
  flex: none;
}

.running::after {
  position: absolute;
  bottom: 2px;
  left: 50%;
  width: 8px;
  height: 8px;
  margin-left: -4px;
  border-radius: 50%;
  background: #b89bb0;
  content: "";
}

.badge {
  position: absolute;
  top: 9px;
  right: 3px;
  min-width: 44px;
  height: 44px;
  padding: 0 4px;
  border-radius: 22px;
  background: #df4b3f;
  color: #fff;
  font-size: 25px;
  line-height: 44px;
  text-align: center;
}

.dock-rule {
  width: 2px;
  height: 110px;
  margin: 0 27px;
  background: #8a5755;
}

.shelf {
  display: flex;
  width: 384px;
}
</style>
